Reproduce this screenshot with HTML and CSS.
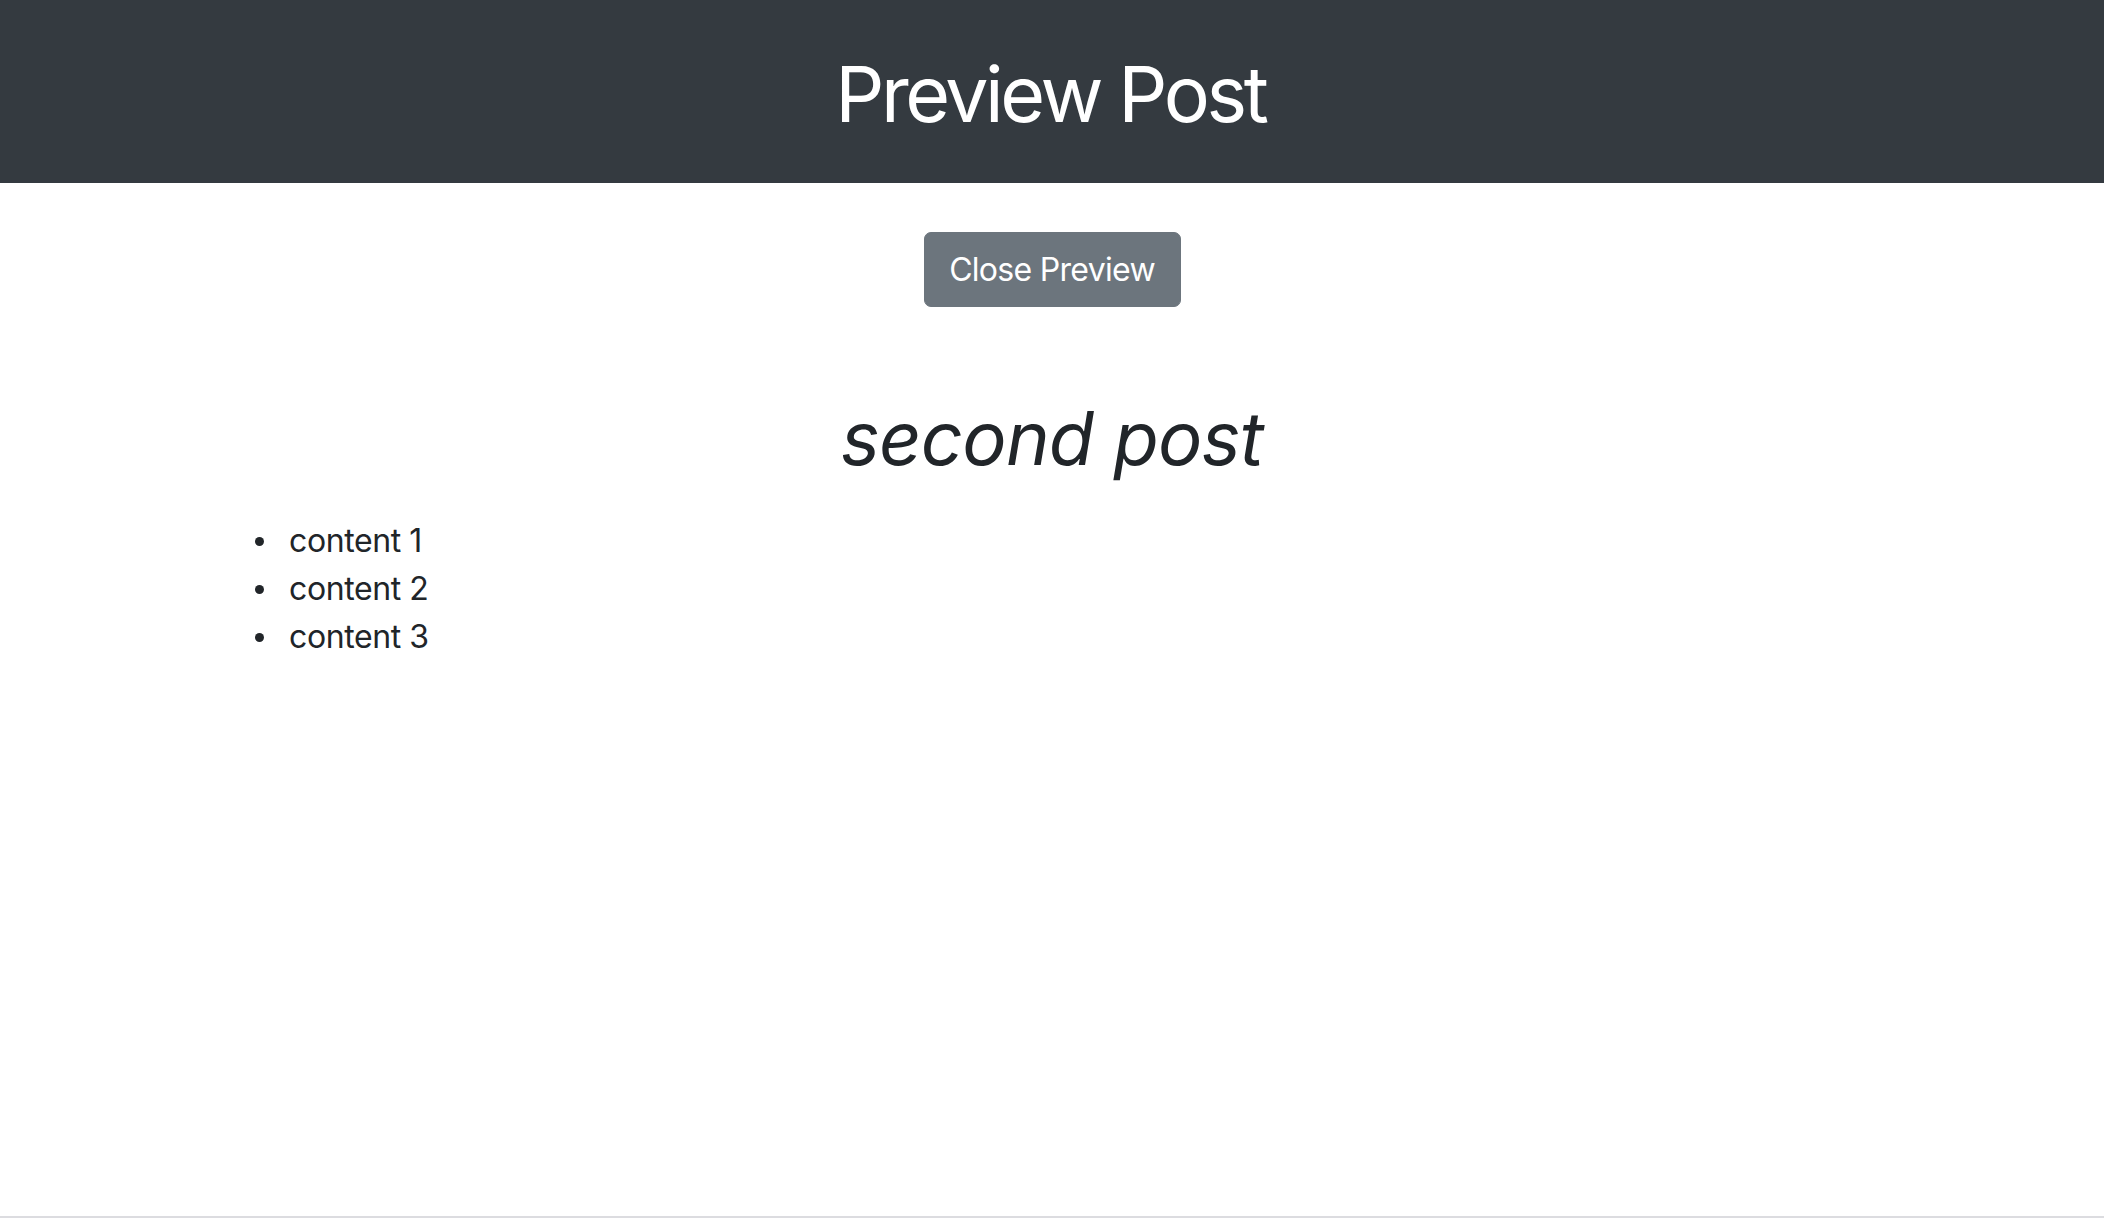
FILE: index.html
```html
<!DOCTYPE html>
<html lang="en">
<head>
<meta charset="utf-8">
<title>Preview Post</title>
<link rel="stylesheet" href="styles.css">
</head>
<body>
<header class="masthead">
  <h1 class="masthead-title">Preview Post</h1>
</header>
<main class="page">
  <div class="actions">
    <button class="btn-close" type="button">Close Preview</button>
  </div>
  <article class="post">
    <h2 class="post-title">second post</h2>
    <ul class="post-list">
      <li>content 1</li>
      <li>content 2</li>
      <li>content 3</li>
    </ul>
  </article>
</main>
<div class="bottom-rule"></div>
</body>
</html>
```

FILE: styles.css
```css
html, body {
  margin: 0;
  padding: 0;
  height: 100%;
}
body {
  font-family: Inter, "Noto Sans", sans-serif;
  color: #212529;
  background: #fff;
  display: flex;
  flex-direction: column;
}
.masthead {
  background: #343a40;
  height: 183px;
  box-sizing: border-box;
  padding-top: 5px;
  display: flex;
  align-items: center;
  justify-content: center;
}
.masthead-title {
  margin: 0;
  color: #fff;
  font-size: 77px;
  font-weight: 400;
  line-height: 1.2;
  letter-spacing: -3.4px;
  text-indent: -3.4px;
}
.page {
  flex: 1;
}
.actions {
  display: flex;
  justify-content: center;
  margin-top: 49px;
}
.btn-close {
  font-family: Inter, "Noto Sans", sans-serif;
  font-size: 32px;
  line-height: 1;
  letter-spacing: -0.7px;
  white-space: nowrap;
  color: #fff;
  background: #6c757d;
  border: 1px solid #6c757d;
  border-radius: 7px;
  box-sizing: border-box;
  width: 257px;
  height: 75px;
  padding: 0 0 0;
}
.post {
  padding-left: 255px;
}
.post-title {
  margin: 87px 0 34px -255px;
  text-align: center;
  font-style: italic;
  font-weight: 400;
  font-size: 74px;
  line-height: 88.8px;
  letter-spacing: -0.8px;
}
.post-list {
  margin: 0;
  padding: 0;
  list-style: none;
  font-size: 32px;
  line-height: 48px;
  letter-spacing: -0.4px;
}
.post-list li {
  display: flex;
  align-items: center;
}
.post-list li::before {
  content: "";
  width: 9px;
  height: 9px;
  border-radius: 50%;
  background: #212529;
  margin: 2px 25px 0 0;
}
.bottom-rule {
  height: 2px;
  margin-bottom: 2px;
  background: #dcdce0;
}
```
